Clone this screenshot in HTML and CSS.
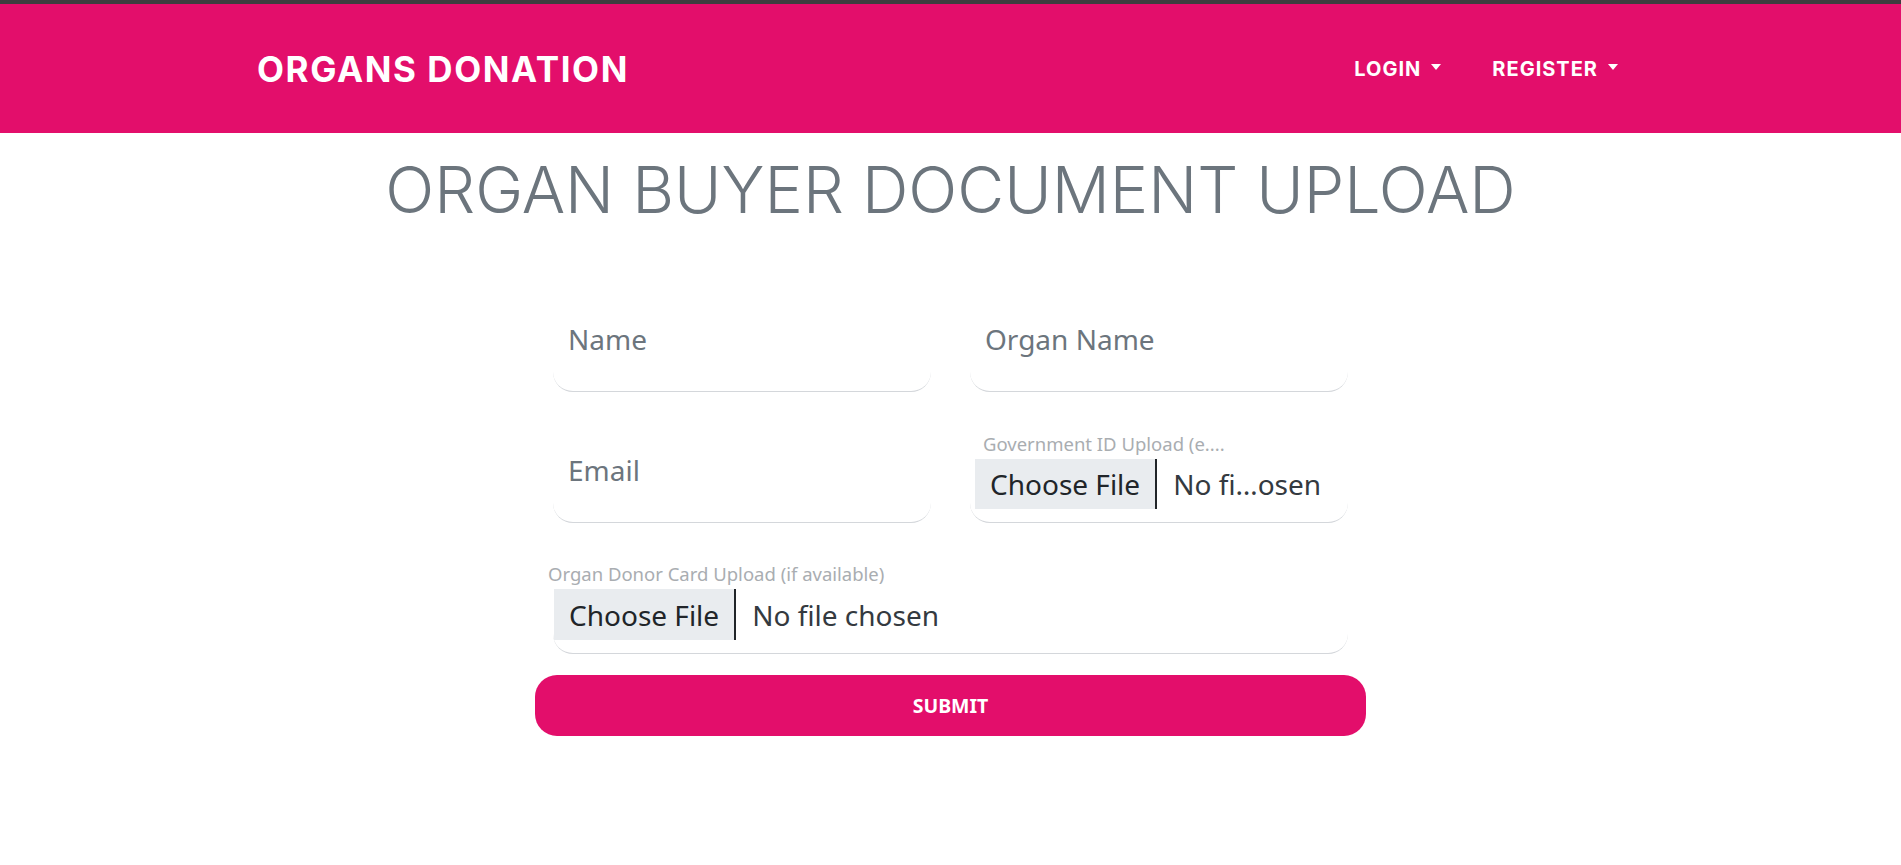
FILE: index.html
```html
<!DOCTYPE html>
<html lang="en">
<head>
<meta charset="utf-8">
<title>Organ Buyer Document Upload</title>
<link rel="stylesheet" href="styles.css">
</head>
<body>
<div class="topbar"></div>
<header class="navbar">
  <div class="nav-inner">
    <a class="brand" href="#">ORGANS DONATION</a>
    <nav class="nav-links">
      <a class="nav-link dropdown" href="#">LOGIN</a>
      <a class="nav-link dropdown" href="#">REGISTER</a>
    </nav>
  </div>
</header>
<main class="page">
  <h1 class="page-title">ORGAN BUYER DOCUMENT UPLOAD</h1>
  <form class="upload-form">
    <div class="form-grid">
      <div class="field"><input class="field-input" type="text" placeholder="Name"></div>
      <div class="field"><input class="field-input" type="text" placeholder="Organ Name"></div>
      <div class="field"><input class="field-input" type="email" placeholder="Email"></div>
      <div class="field file-field gov">
        <span class="file-label">Government ID Upload (e....</span>
        <div class="file-control">
          <span class="file-btn">Choose File</span>
          <span class="file-name">No fi…osen</span>
        </div>
      </div>
      <div class="field file-field card">
        <span class="file-label">Organ Donor Card Upload (if available)</span>
        <div class="file-control">
          <span class="file-btn">Choose File</span>
          <span class="file-name">No file chosen</span>
        </div>
      </div>
    </div>
    <button class="submit" type="button">SUBMIT</button>
  </form>
</main>
</body>
</html>
```
FILE: styles.css
```css
* { box-sizing: border-box; }
html, body { margin: 0; padding: 0; background: #fff; }
body { font-family: "Noto Sans", "Open Sans", sans-serif; }

.topbar { height: 4px; background: #3d3d3f; }

.navbar { height: 129px; background: #e30e6b; }
.nav-inner {
  max-width: 1387px;
  height: 100%;
  margin: 0 auto;
  display: flex;
  align-items: center;
  justify-content: space-between;
}
.brand {
  font-family: Inter, "DejaVu Sans", sans-serif;
  font-weight: 700;
  font-size: 35px;
  letter-spacing: 1.6px;
  color: #fff;
  text-decoration: none;
}
.nav-links { display: flex; align-items: center; }
.nav-link {
  font-family: Inter, "DejaVu Sans", sans-serif;
  font-weight: 700;
  font-size: 20px;
  letter-spacing: 1px;
  color: #fff;
  text-decoration: none;
  padding: 0 26px 0 25px;
  display: flex;
  align-items: center;
}
.dropdown::after {
  content: "";
  display: inline-block;
  margin-left: 10px;
  border-top: 6px solid #fff;
  border-left: 5.5px solid transparent;
  border-right: 5.5px solid transparent;
  margin-top: -3px;
}

.page { display: flex; flex-direction: column; align-items: center; }
.page-title {
  margin: 21px 0 0;
  font-family: Inter, "DejaVu Sans", sans-serif;
  font-weight: 300;
  font-size: 64.5px;
  line-height: 72px;
  color: #6c757d;
  letter-spacing: 0;
}

.upload-form { width: 795px; margin-top: 70px; display: flex; flex-direction: column; align-items: center; }
.form-grid {
  width: 795px;
  display: grid;
  grid-template-columns: 378px 378px;
  column-gap: 39px;
  row-gap: 35px;
}
.field {
  height: 96px;
  border-bottom: 1px solid #d4d7db;
  border-radius: 20px;
  background: #fff;
}
.field-input {
  width: 100%;
  height: 95px;
  border: 0;
  outline: none;
  background: transparent;
  padding: 27px 15px 36px;
  font-family: "Noto Sans", "Open Sans", sans-serif;
  font-size: 28px;
  line-height: 32px;
  color: #212529;
}
.field-input::placeholder { color: #6c757d; opacity: 1; }

.file-field { display: flex; flex-direction: column; padding-top: 7px; }
.file-field.card { grid-column: 1 / span 2; padding-top: 6px; }
.file-label {
  height: 20px;
  line-height: 20px;
  font-size: 18.5px;
  color: #a9adb1;
  white-space: nowrap;
}
.gov .file-label { padding-left: 13px; }
.card .file-label { margin-left: -5px; }
.file-control { display: flex; align-items: stretch; margin-top: 5px; height: 51px; }
.gov .file-control { margin-left: 5px; height: 50px; }
.card .file-control { margin-left: 1px; }
.file-btn {
  display: flex;
  align-items: center;
  padding: 0 15px;
  background: #e9ecef;
  color: #212529;
  font-size: 28px;
  border-right: 2px solid #212529;
}
.file-name {
  display: flex;
  align-items: center;
  padding-left: 16px;
  color: #343a40;
  font-size: 28px;
}

.submit {
  width: 831px;
  height: 61px;
  margin-top: 21px;
  border: 0;
  border-radius: 22px;
  background: #e30e6b;
  color: #fff;
  font-family: "Noto Sans", "Open Sans", sans-serif;
  font-weight: 700;
  font-size: 19.5px;
  cursor: pointer;
}
```
